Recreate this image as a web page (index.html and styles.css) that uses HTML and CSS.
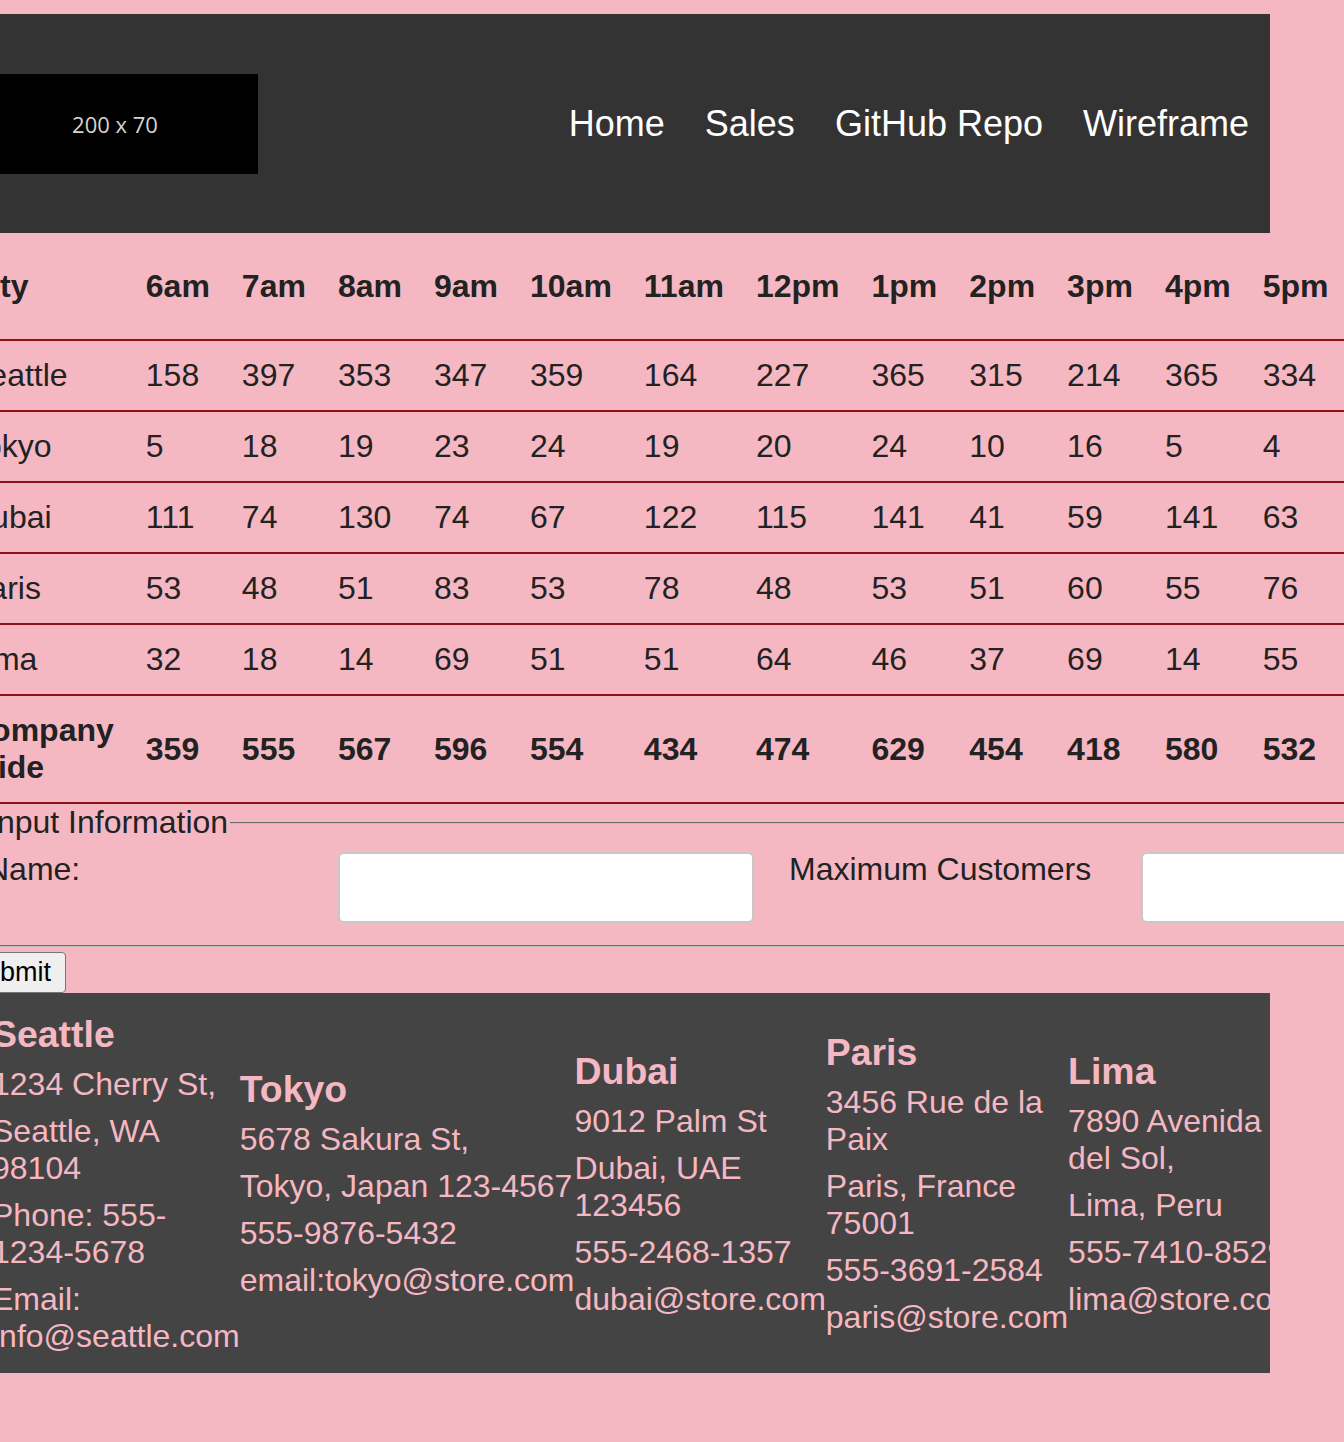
FILE: index.html
```html
<!DOCTYPE html>
<html lang="en">
<head>
<meta charset="utf-8">
<title>Salmon Cookies - Sales</title>
<link rel="stylesheet" href="styles.css">
</head>
<body>
<div class="page">
  <header class="site-header">
    <div class="logo"><span>200 x 70</span></div>
    <nav class="nav">
      <a href="#">Home</a>
      <a href="#">Sales</a>
      <a href="#">GitHub Repo</a>
      <a href="#">Wireframe</a>
    </nav>
  </header>

  <table class="sales">
    <thead>
      <tr>
        <th class="city">City</th>
        <th>6am</th><th>7am</th><th>8am</th><th>9am</th><th>10am</th><th>11am</th><th>12pm</th><th>1pm</th><th>2pm</th><th>3pm</th><th>4pm</th><th>5pm</th><th>6pm</th><th>7pm</th>
        <th class="daily">Daily Location<br>Total</th>
      </tr>
    </thead>
    <tbody>
      <tr><td class="city">Seattle</td><td>158</td><td>397</td><td>353</td><td>347</td><td>359</td><td>164</td><td>227</td><td>365</td><td>315</td><td>214</td><td>365</td><td>334</td><td>201</td><td>288</td><td>4087</td></tr>
      <tr><td class="city">Tokyo</td><td>5</td><td>18</td><td>19</td><td>23</td><td>24</td><td>19</td><td>20</td><td>24</td><td>10</td><td>16</td><td>5</td><td>4</td><td>12</td><td>9</td><td>208</td></tr>
      <tr><td class="city">Dubai</td><td>111</td><td>74</td><td>130</td><td>74</td><td>67</td><td>122</td><td>115</td><td>141</td><td>41</td><td>59</td><td>141</td><td>63</td><td>88</td><td>102</td><td>1328</td></tr>
      <tr><td class="city">Paris</td><td>53</td><td>48</td><td>51</td><td>83</td><td>53</td><td>78</td><td>48</td><td>53</td><td>51</td><td>60</td><td>55</td><td>76</td><td>49</td><td>62</td><td>820</td></tr>
      <tr><td class="city">Lima</td><td>32</td><td>18</td><td>14</td><td>69</td><td>51</td><td>51</td><td>64</td><td>46</td><td>37</td><td>69</td><td>14</td><td>55</td><td>40</td><td>33</td><td>593</td></tr>
    </tbody>
    <tfoot>
      <tr><th class="city">Company Wide</th><th>359</th><th>555</th><th>567</th><th>596</th><th>554</th><th>434</th><th>474</th><th>629</th><th>454</th><th>418</th><th>580</th><th>532</th><th>390</th><th>494</th><th>7036</th></tr>
    </tfoot>
  </table>

  <form class="store-form">
    <fieldset class="fields">
      <legend>Input Information</legend>
      <div class="field-row">
        <label class="field-label" for="name">Name:</label>
        <input class="field-input" id="name" type="text">
        <label class="field-label" for="maxcust">Maximum Customers</label>
        <input class="field-input" id="maxcust" type="number">
        <label class="field-label" for="mincust">Minimum Customers</label>
        <input class="field-input" id="mincust" type="number">
      </div>
    </fieldset>
    <button class="submit" type="submit">Submit</button>
  </form>

  <footer class="site-footer">
    <div class="store">
      <h3>Seattle</h3>
      <p>1234 Cherry St,</p>
      <p>Seattle, WA 98104</p>
      <p>Phone: 555-1234-5678</p>
      <p>Email: info@seattle.com</p>
    </div>
    <div class="store">
      <h3>Tokyo</h3>
      <p>5678 Sakura St,</p>
      <p>Tokyo, Japan 123-4567</p>
      <p>555-9876-5432</p>
      <p>email:tokyo@store.com</p>
    </div>
    <div class="store">
      <h3>Dubai</h3>
      <p>9012 Palm St</p>
      <p>Dubai, UAE 123456</p>
      <p>555-2468-1357</p>
      <p>dubai@store.com</p>
    </div>
    <div class="store">
      <h3>Paris</h3>
      <p>3456 Rue de la Paix</p>
      <p>Paris, France 75001</p>
      <p>555-3691-2584</p>
      <p>paris@store.com</p>
    </div>
    <div class="store">
      <h3>Lima</h3>
      <p>7890 Avenida del Sol,</p>
      <p>Lima, Peru</p>
      <p>555-7410-8529</p>
      <p>lima@store.com</p>
    </div>
  </footer>
</div>
</body>
</html>
```

FILE: styles.css
```css
html {
  background: #f5b8c3;
  overflow: hidden;
}

body {
  margin: 0;
  padding-top: 14px;
  overflow: hidden;
  font-family: "Liberation Sans", Arial, Helvetica, sans-serif;
  font-size: 32px;
  color: #222;
}

.page {
  margin-left: -58px;
  width: 1328px;
}

/* Header */
.site-header {
  height: 219px;
  background: #333;
  display: flex;
  align-items: center;
  justify-content: space-between;
  padding: 0 21px 0 30px;
  box-sizing: border-box;
}

.logo {
  width: 286px;
  height: 100px;
  background: #000;
  display: flex;
  align-items: center;
  justify-content: center;
  flex: none;
}

.logo span {
  font-family: "Open Sans", "DejaVu Sans", sans-serif;
  font-size: 22px;
  color: #d4d4d4;
}

.nav {
  display: flex;
  gap: 40px;
}

.nav a {
  color: #fff;
  text-decoration: none;
  font-size: 36px;
}

/* Table */
.sales {
  border-collapse: collapse;
  margin-left: 10px;
}

.sales th,
.sales td {
  padding: 16px;
  line-height: 37px;
  text-align: left;
  vertical-align: middle;
  border-bottom: 2px solid #8b1414;
}

.sales th {
  font-weight: bold;
}

.sales .daily {
  white-space: nowrap;
}

/* Form */
.store-form {
  margin: 0;
}

.fields {
  margin: 0 0 0 18px;
  padding: 11px 24px 22px;
  border: 2px groove rgb(192, 192, 192);
  font-size: 32px;
}

.fields legend {
  padding: 0 2px;
  line-height: 37px;
}

.field-row {
  display: flex;
  align-items: flex-start;
}

.field-label {
  flex: none;
  width: 352px;
  line-height: 37px;
  margin-top: -1px;
}

.field-input {
  flex: none;
  width: 416px;
  height: 71px;
  box-sizing: border-box;
  margin: 0 35px 0 0;
  background: #fff;
  border: 2px solid #c8c8c8;
  border-radius: 6px;
  font-size: 24px;
  padding: 0 8px;
}

.submit {
  display: block;
  margin: 5px 0 0 10px;
  font-family: "Liberation Sans", Arial, sans-serif;
  font-size: 27px;
  line-height: 31px;
  padding: 4px 14px;
  color: #000;
  background: #efefef;
  border: 1px solid #767676;
  border-radius: 4px;
}

/* Footer */
.site-footer {
  margin-top: 0;
  height: 380px;
  box-sizing: border-box;
  background: #444;
  color: #f5b8c3;
  display: flex;
  align-items: center;
  padding: 1px 0 0 50px;
  overflow: hidden;
}

.store {
  flex: 0 1 auto;
  min-width: min-content;
}

.store h3 {
  font-size: 37.44px;
  margin: 10px 0;
  line-height: 43px;
}

.store p {
  margin: 10px 0;
  line-height: 37px;
}
```
